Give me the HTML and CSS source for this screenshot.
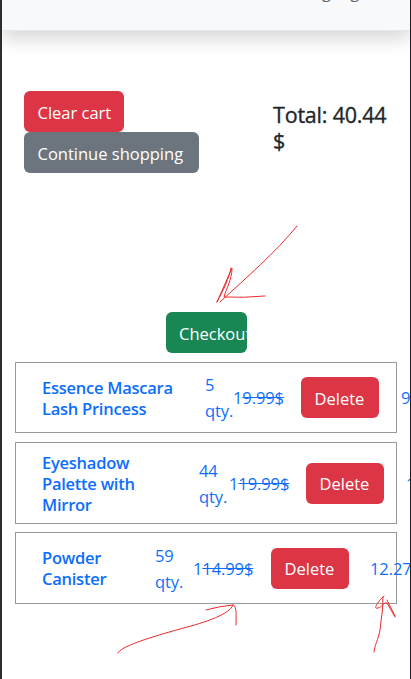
FILE: index.html
```html
<!DOCTYPE html>
<html lang="en">
<head>
<meta charset="utf-8">
<title>Cart</title>
<link rel="stylesheet" href="styles.css">
</head>
<body>
<div class="page">
  <header class="navbar"><span class="nav-link">Language</span></header>
  <section class="summary">
    <div class="actions">
      <button class="btn danger clear">Clear cart</button>
      <button class="btn secondary">Continue shopping</button>
    </div>
    <h2 class="total">Total: 40.44<br>$</h2>
  </section>
  <button class="btn success">Checkout</button>
  <main class="items">
    <article class="item first">
      <h3 class="name">Essence Mascara<br>Lash Princess</h3>
      <p class="qty">5<br>qty.</p>
      <p class="price">1<s>9.99$</s></p>
      <button class="btn danger delete">Delete</button>
      <p class="sum">9.99</p>
    </article>
    <article class="item second">
      <h3 class="name">Eyeshadow<br>Palette with<br>Mirror</h3>
      <p class="qty">44<br>qty.</p>
      <p class="price">1<s>19.99$</s></p>
      <button class="btn danger delete">Delete</button>
      <p class="sum">18.18</p>
    </article>
    <article class="item third">
      <h3 class="name">Powder<br>Canister</h3>
      <p class="qty">59<br>qty.</p>
      <p class="price">1<s>14.99$</s></p>
      <button class="btn danger delete">Delete</button>
      <p class="sum">12.27</p>
    </article>
  </main>
</div>
<svg class="marks" width="411" height="679" viewBox="0 0 411 679">
  <path d="M297 226C275 253 247 277 220 302M217 302L232 268C232 280 226 289 224 297Q244 298 265 296M217 302C224 289 229 278 231 268"/>
  <path d="M118 653C119 647 151 637 180 629C207 622 230 614 233 605M206 610Q220 606 233 605C237 606 236 616 236 625"/>
  <path d="M374 652C375 642 380 639 381 621Q383 611 383 597M384 596C379 600 372 610 378 608C382 607 384 602 387 603L395 617M387 600L395 616"/>
</svg>
</body>
</html>
```

FILE: styles.css
```css
* { box-sizing: border-box; }
body { margin: 0; background: #fff; }
.page {
  height: 679px;
  overflow: hidden;
  border-left: 2px solid #2b2d31;
  border-right: 1px solid #1e1f22;
  font: 16.5px/26px "Open Sans", "Noto Sans", sans-serif;
  color: #212529;
}
.navbar {
  height: 31px;
  background: #f8f9fb;
  border-bottom: 1px solid #e6e7ea;
  box-shadow: 0 9px 17px rgba(0, 0, 0, .15);
}
.nav-link { display: block; margin: 0 0 0 292px; transform: translateY(-21px); color: #65676a; }
.summary { display: flex; height: 281px; padding: 60px 0 0 22px; }
.actions { display: flex; flex-direction: column; align-items: flex-start; width: 249px; }
.btn {
  display: block;
  flex: none;
  height: 41px;
  margin: 0;
  padding: 2px 0 0 13.5px;
  border: 0;
  border-radius: 6px;
  font: inherit;
  color: #fff;
  text-align: left;
  white-space: nowrap;
  overflow: hidden;
}
.danger { background: #dc3545; }
.secondary { width: 175px; background: #6c757d; }
.clear { width: 100px; }
.success { width: 81px; margin-left: 164px; padding-left: 13px; background: #198754; }
.total { margin: 11px 0 0; font-size: 21.5px; line-height: 26px; font-weight: 500; letter-spacing: -.2px; white-space: nowrap; -webkit-text-stroke: .35px #212529; }
.items { display: flex; flex-direction: column; gap: 9px; margin: 9px 13px 0; }
.item {
  display: flex;
  align-items: center;
  height: 71px;
  padding-left: 26px;
  border: 1px solid #999;
  color: #0d6efd;
  white-space: nowrap;
}
.item p { margin: 0; flex: none; letter-spacing: -.1px; }
.name { flex: none; margin: 0; padding-top: 0; width: 163px; font-size: 16.5px; line-height: 21px; font-weight: 600; letter-spacing: -.25px; }
.item .qty { width: 28px; padding-top: 1px; }
.item .price { width: 68px; padding-top: 1px; }
.item .sum { padding-top: 1px; margin-left: 22px; }
.delete { width: 78px; }
.second { height: 82px; }
.second .name { width: 157px; }
.second .qty { width: 30px; }
.second .price { width: 77px; }
.third { height: 72px; margin-top: -1px; }
.third .name { width: 113px; }
.third .qty { width: 38px; }
.third .price { width: 78px; }
.third .sum { margin-left: 21px; }
.marks { position: absolute; left: 0; top: 0; fill: none; stroke: #e92b2b; stroke-width: 1; stroke-linecap: round; }
```
